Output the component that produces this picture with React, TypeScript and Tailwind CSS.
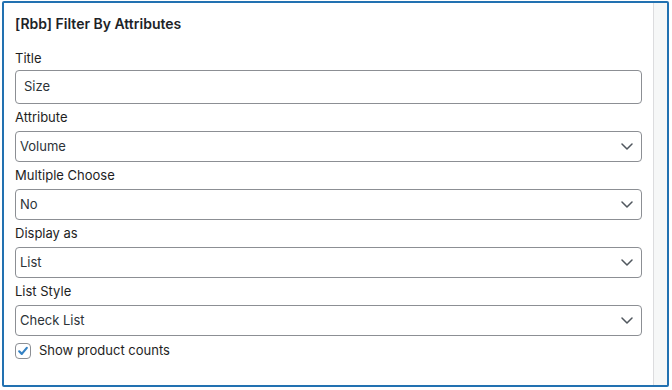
import React from 'react';

const Chevron = () => (
  <svg width="12" height="7" viewBox="0 0 12 7" fill="none" className="shrink-0">
    <path d="M1 1l5 5 5-5" stroke="#50575e" strokeWidth="1.5" strokeLinecap="round" strokeLinejoin="round" />
  </svg>
);

const SelectBox: React.FC<{ value: string }> = ({ value }) => (
  <div className="flex h-[31px] items-center justify-between rounded-[4px] border border-[#8c8f94] bg-white pl-[4px] pr-[8px] text-[13px] text-[#2c3338]">
    <span>{value}</span>
    <Chevron />
  </div>
);

const Label: React.FC<{ text: string }> = ({ text }) => (
  <div className="mt-[4px] mb-[5px] h-[18px] text-[13px] leading-[18px] text-[#1e1e1e]">{text}</div>
);

export default function App() {
  const fields = [
    { label: 'Attribute', value: 'Volume' },
    { label: 'Multiple Choose', value: 'No' },
    { label: 'Display as', value: 'List' },
    { label: 'List Style', value: 'Check List' },
  ];

  return (
    <div className="h-[390px] w-[672px] bg-white pl-[2px] pt-[1px]" style={{ fontFamily: 'Inter, "Noto Sans", sans-serif' }}>
      <div className="flex h-[386px] w-[667px] rounded-[2px] border-2 border-[#2271b1] bg-white">
        <div className="flex-1 px-[11px] pt-[12px]">
          <h3 className="h-[18px] text-[14px] font-semibold leading-[18px] text-[#1d2327]">[Rbb] Filter By Attributes</h3>

          <div className="mt-[16px] mb-[3px] h-[18px] text-[13px] leading-[18px] text-[#1e1e1e]">Title</div>
          <div className="mb-[1px] flex h-[34px] items-center rounded-[4px] border border-[#8c8f94] bg-white pl-[8px] text-[13px] text-[#2c3338]">
            Size
          </div>

          {fields.map((f) => (
            <div key={f.label}>
              <Label text={f.label} />
              <SelectBox value={f.value} />
            </div>
          ))}

          <label className="mt-[5px] flex items-center gap-[8px] text-[13px] text-[#1e1e1e]">
            <span className="flex h-[16px] w-[16px] items-center justify-center rounded-[4px] border border-[#8c8f94] bg-white">
              <svg width="12" height="12" viewBox="0 0 12 12" fill="none">
                <path d="M2.2 6.3l2.6 2.6 5-6" stroke="#3582c4" strokeWidth="2.2" strokeLinecap="round" strokeLinejoin="round" />
              </svg>
            </span>
            Show product counts
          </label>
        </div>
        <div className="w-[14px] border-l border-[#dcdcde] bg-[#f6f7f7]" />
      </div>
    </div>
  );
}
